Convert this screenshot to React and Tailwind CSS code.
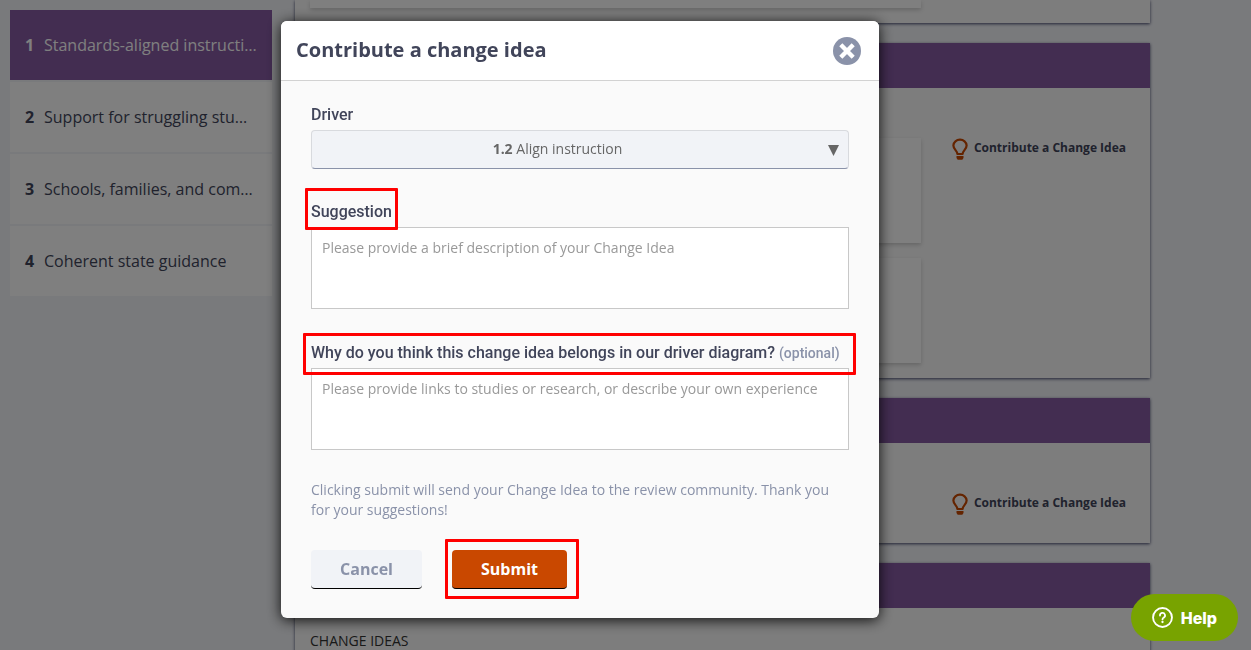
import React from 'react';

const drivers = [
  'Standards-aligned instruction',
  'Support for struggling students',
  'Schools, families, and communities',
  'Coherent state guidance'
];

const BulbIcon = () => (
  <svg width="16" height="22" viewBox="0 0 16 22" aria-hidden="true">
    <path
      d="M5.4 16c0-3.4-4-4.6-4-8.6A6.5 6 0 0 1 8 1.7a6.5 6 0 0 1 6.6 5.7c0 4-4 5.2-4 8.6z"
      fill="none"
      stroke="currentColor"
      strokeWidth="2.2"
      strokeLinejoin="round"
    />
    <path d="M4.5 18h7v2l-1.2 1.7H5.7L4.5 20z" fill="currentColor" />
  </svg>
);

const Sidebar = () => (
  <nav className="w-[262px] shrink-0 flex flex-col gap-0.5 pt-2.5">
    {drivers.map((name, index) => (
      <a
        key={name}
        href="#"
        className={`flex items-center h-[70px] px-[15px] text-base ${
          index === 0 ? 'bg-[#865aa3] text-white' : 'bg-white text-[#41455a]'
        }`}
      >
        <span className="w-[19px] shrink-0 font-bold">{index + 1}</span>
        <span className="truncate">{name}</span>
      </a>
    ))}
  </nav>
);

const IdeaCard = ({ className }) => (
  <div className={`bg-white shadow-[0_2px_4px_rgba(0,0,0,0.18)] ${className}`} />
);

const Panel = ({ header = true, heading, children }) => (
  <section className="bg-[#fafafa] shadow-[0_1px_3px_#41456a]">
    {header && <div className="h-[45px] bg-[#865aa3]" />}
    <div className="flex items-start px-[15px] pb-[15px]">
      <div className="flex-1 flex flex-col">
        {header && (
          <div className="h-[50px] pt-[15px]">
            {heading && <h3 className="text-sm leading-[35px] text-[#333333]">{heading}</h3>}
          </div>
        )}
        <div className="flex flex-col gap-[15px]">{children}</div>
      </div>
      <div className="w-[214px] shrink-0 pt-12 pr-[9px] flex justify-end">
        {header && (
          <button className="flex items-center gap-1.5 text-xs leading-5 font-bold text-[#41455a]">
            <span className="pt-0.5 text-[#c94800]">
              <BulbIcon />
            </span>
            Contribute a Change Idea
          </button>
        )}
      </div>
    </div>
  </section>
);

// Red frame drawn over a part of the form
const Highlight = ({ className }) => (
  <span
    aria-hidden="true"
    className={`absolute z-10 border-3 border-[#ff0000] rounded-[1px] pointer-events-none ${className}`}
  />
);

const textareaClass =
  'block w-full h-[82px] resize-none border border-[#c8c8c8] bg-white px-2.5 py-2.5 text-sm leading-5 text-[#41455a] placeholder:text-[#999999] outline-none';

const labelClass =
  "block pt-0.5 font-['Roboto',sans-serif] text-base leading-[30px] font-medium text-[#41455a]";

const Modal = () => (
  <div
    role="dialog"
    aria-modal="true"
    aria-labelledby="modal-title"
    className="w-[598px] rounded-md overflow-hidden bg-[#fafafa] shadow-[0_2px_14px_rgba(0,0,0,0.9)]"
  >
    <header className="flex items-center justify-between h-[60px] pl-[15px] pr-[18px] bg-white border-b border-[#d2d2d2]">
      <h2 id="modal-title" className="pb-0.5 text-xl leading-7 font-bold text-[#41455a]">
        Contribute a change idea
      </h2>
      <button aria-label="Close">
        <svg width="28" height="28" viewBox="0 0 28 28">
          <circle cx="14" cy="14" r="14" fill="#8a92a9" />
          <path d="M7.8 7.8l12.4 12.4M20.2 7.8L7.8 20.2" stroke="#ffffff" strokeWidth="4.4" />
        </svg>
      </button>
    </header>

    <form className="px-[30px] pt-[17px] pb-[29px]" onSubmit={(e) => e.preventDefault()}>
      <label htmlFor="driver" className={labelClass}>
        Driver
      </label>
      <div className="relative">
        <select
          id="driver"
          className="block w-full h-[39px] appearance-none rounded-[4px] border border-[#d8dade] border-b-[#8a92a9] bg-[#f1f3f7] text-sm text-transparent"
        >
          <option>1.2 Align instruction</option>
        </select>
        <span
          aria-hidden="true"
          className="absolute inset-0 flex items-center justify-between pl-3 pr-2.5 pb-0.5 text-sm text-[#666666] pointer-events-none"
        >
          <span className="flex-1 text-center pl-5 pr-14">
            <b>1.2</b> Align instruction
          </span>
          <svg width="11" height="11" viewBox="0 0 11 11" className="mt-1">
            <path d="M0 0h11L5.5 11z" fill="#666666" />
          </svg>
        </span>
      </div>

      <div className="mt-[26px]">
        <div className="relative w-fit">
          <label htmlFor="suggestion" className={labelClass}>
            Suggestion
          </label>
          <Highlight className="-left-1.5 -right-1.5 -top-[7px] -bottom-[3px]" />
        </div>
        <textarea
          id="suggestion"
          className={textareaClass}
          placeholder="Please provide a brief description of your Change Idea"
        />
      </div>

      <div className="mt-[27px]">
        <div className="relative">
          <label htmlFor="reason" className={labelClass}>
            Why do you think this change idea belongs in our driver diagram?{' '}
            <span className="text-sm text-[#8a92a9]">(optional)</span>
          </label>
          <Highlight className="-left-2 -right-[7px] -top-[3px] -bottom-[7px]" />
        </div>
        <textarea
          id="reason"
          className={textareaClass}
          placeholder="Please provide links to studies or research, or describe your own experience"
        />
      </div>

      <p className="mt-[30px] text-sm leading-5 text-[#8a92a9]">
        Clicking submit will send your Change Idea to the review community. Thank you for your
        suggestions!
      </p>

      <div className="mt-[30px] flex gap-[30px]">
        <button
          type="button"
          className="h-[39px] w-[111px] rounded-[4px] border-b border-black bg-[#f1f3f7] text-base font-bold text-[#8a92a9]"
        >
          Cancel
        </button>
        <div className="relative">
          <button
            type="submit"
            className="block h-[39px] w-[115px] rounded-[4px] border-b border-black bg-[#c94800] text-base font-bold text-white"
          >
            Submit
          </button>
          <Highlight className="-left-[7px] -right-3 -top-[11px] -bottom-2.5" />
        </div>
      </div>
    </form>
  </div>
);

export default function App() {
  return (
    <div className="h-screen overflow-hidden bg-[#f3f5f9] font-['Open_Sans',sans-serif]">
      <div className="flex items-start gap-[23px] max-w-[1150px] pl-2.5">
        <Sidebar />
        <main className="flex-1 flex flex-col gap-5">
          {/* tail of the panel that is scrolled out above */}
          <section className="bg-[#fafafa] shadow-[0_1px_3px_#41456a] pl-[15px] pr-[229px] pb-[15px]">
            <IdeaCard className="h-2" />
          </section>
          <Panel>
            <IdeaCard className="h-[105px]" />
            <IdeaCard className="h-[105px]" />
          </Panel>
          <Panel>
            <div className="h-[35px]" />
          </Panel>
          <Panel heading="CHANGE IDEAS">
            <IdeaCard className="h-[105px]" />
          </Panel>
        </main>
      </div>

      <div className="fixed inset-0 bg-black/50">
        <div className="flex justify-center max-w-[1150px] pl-2.5 pt-[21px]">
          <Modal />
        </div>
      </div>

      <button className="fixed right-[13px] bottom-[9px] flex items-center gap-2 h-[47px] px-[21px] rounded-full bg-[#78a300] font-['Inter',sans-serif] text-base font-extrabold text-white">
        <svg width="21" height="21" viewBox="0 0 20 20" fill="none" stroke="#ffffff" aria-hidden="true">
          <circle cx="10" cy="10" r="9" strokeWidth="1.8" />
          <path
            d="M7.6 8.1a2.4 2.4 0 1 1 3.6 2c-.8.5-1.2.8-1.2 1.7"
            strokeWidth="1.7"
            strokeLinecap="round"
          />
          <circle cx="10" cy="14.3" r="1.1" fill="#ffffff" stroke="none" />
        </svg>
        Help
      </button>
    </div>
  );
}
